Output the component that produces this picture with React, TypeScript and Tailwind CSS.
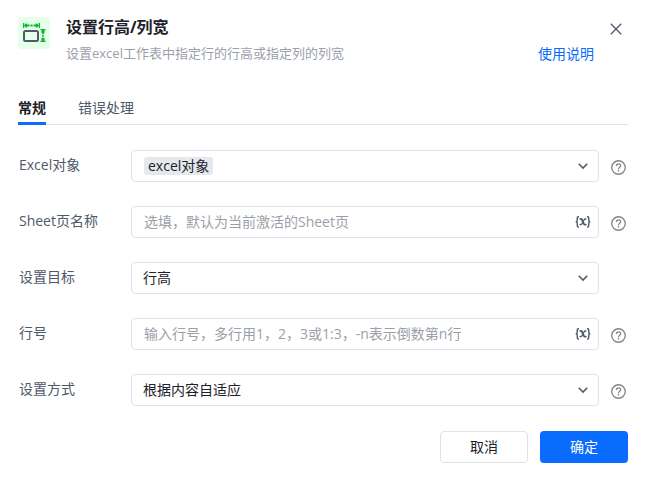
import React from 'react';

function SizeIcon() {
  return (
    <svg viewBox="0 0 32 32" className="size-8 shrink-0" aria-hidden="true">
      <rect width="32" height="32" rx="4" fill="#e6ffea" />
      <rect x="6" y="14" width="14" height="10" rx="1.5" fill="none" stroke="#4e5969" strokeWidth="2" />
      <g stroke="#0ab82c" fill="none">
        <path d="M5.700 6v5M21.300 6v5" strokeWidth="1.400" />
        <path d="M7 8.500h4.500M12.500 8.500h2M15.500 8.500h4.500" strokeWidth="1.800" />
        <path d="M22.500 12.700h5M22.500 24.300h5" strokeWidth="1.400" />
        <path d="M25 13v4M25 18h0M25 17.700v1.800M25 20.500v4" strokeWidth="1.800" />
      </g>
      <path d="M6 8.500l3-2.400v4.800zM21 8.500l-3-2.400v4.800zM25 12.500l-2.400 3h4.800zM25 24.500l-2.400-3h4.800z" fill="#0ab82c" />
    </svg>
  );
}

function Chevron() {
  return (
    <svg viewBox="0 0 12 12" className="pointer-events-none size-3 shrink-0" fill="none" stroke="#4e5969" strokeWidth="1.600" aria-hidden="true">
      <path d="M1.800 3.800L6 8l4.200-4.200" />
    </svg>
  );
}

function VariableIcon() {
  return (
    <svg viewBox="0 0 16 14" className="h-3.5 w-4" fill="none" stroke="#4e5969" strokeWidth="1.400" aria-hidden="true">
      <path d="M4 1.700H3.300Q2.300 1.700 2.300 2.800V5Q2.300 6.600 .8 6.800Q2.300 7 2.300 8.600V10.800Q2.300 12 3.300 12H4" />
      <path d="M12 1.700h.7Q13.700 1.700 13.700 2.800V5Q13.700 6.600 15.200 6.800Q13.700 7 13.700 8.600V10.800Q13.700 12 12.700 12H12" />
      <path d="M4.600 4.200Q6.300 3.300 7.100 5L8.900 8.800Q9.700 10.300 11.400 9.300" strokeWidth="1.800" />
      <path d="M11.400 4.200Q9.800 3.500 9 5L7 8.600Q6.200 10.100 4.600 9.300" strokeWidth="1.300" />
    </svg>
  );
}

function Help() {
  return (
    <button type="button" aria-label="帮助" className="mt-[3px] shrink-0">
      <svg viewBox="0 0 16 16" className="size-[15px]" fill="none" stroke="#858585" strokeWidth="1.400" aria-hidden="true">
        <circle cx="8" cy="8" r="7.200" />
        <path d="M5.700 6.400C5.700 5 6.700 4.100 8 4.100s2.300.8 2.300 2.100c0 1.600-2.300 1.600-2.300 3.600" />
        <path d="M8 10.900v1.500" />
      </svg>
    </button>
  );
}

function Row({ id, label, help = true, children }: { id: string; label: string; help?: boolean; children: React.ReactNode }) {
  return (
    <div className="flex items-center">
      <label htmlFor={id} className="-mt-0.5 w-[113px] shrink-0 pl-px text-[#4e5969]">
        {label}
      </label>
      <div className="flex h-8 min-w-0 flex-1 items-center rounded border border-[#e0e2e8] bg-white">{children}</div>
      <div className="ml-3 flex w-[17px] shrink-0">{help && <Help />}</div>
    </div>
  );
}

function SelectField({ id, value }: { id: string; value: string }) {
  return (
    <div className="relative flex h-full flex-1 items-center">
      <select id={id} className="h-full w-full appearance-none bg-transparent pl-[11px] pr-8 text-[#1d2129] outline-none">
        <option>{value}</option>
      </select>
      <span className="pointer-events-none absolute right-[9px]">
        <Chevron />
      </span>
    </div>
  );
}

function TextField({ id, placeholder }: { id: string; placeholder: string }) {
  return (
    <>
      <input
        id={id}
        type="text"
        placeholder={placeholder}
        className="h-full min-w-0 flex-1 bg-transparent pb-0.5 pl-3 outline-none placeholder:text-[#9b9fa9]"
      />
      <button type="button" aria-label="插入变量" className="mr-[7px] shrink-0">
        <VariableIcon />
      </button>
    </>
  );
}

export default function App() {
  return (
    <main className="bg-white pb-[18px] pl-[18px] pr-5 pt-[17px] font-['Open_Sans','Noto_Sans_CJK_SC',sans-serif] text-sm leading-5 text-[#1d2129]">
      <header className="flex">
        <SizeIcon />
        <div className="ml-4 min-w-0 flex-1">
          <h1 className="text-base font-bold leading-5">设置行高/列宽</h1>
          <p className="mt-1.5 text-[13px] leading-5 text-[#9b9fa9]">设置excel工作表中指定行的行高或指定列的列宽</p>
        </div>
        <div className="flex shrink-0 items-start">
          <a href="#help" className="mt-[27px] text-[#0a6cff]">
            使用说明
          </a>
          <button type="button" aria-label="关闭" className="ml-4 mr-1.5 mt-1.5">
            <svg viewBox="0 0 12 12" className="size-3" stroke="#4e5969" strokeWidth="1.300" aria-hidden="true">
              <path d="M.8 .8l10.400 10.400M11.200 .8L.8 11.200" />
            </svg>
          </button>
        </div>
      </header>

      <nav role="tablist" className="mt-[34px] flex gap-8 border-b border-[#e0e2e8]">
        <button type="button" role="tab" aria-selected="true" className="-mb-px h-[27px] border-b-3 border-[#0a6cff] pb-1 font-bold">
          常规
        </button>
        <button type="button" role="tab" aria-selected="false" className="-mb-px h-[27px] border-b-3 border-transparent pb-1 text-[#4e5969]">
          错误处理
        </button>
      </nav>

      <form className="mt-[25px] flex flex-col gap-6">
        <Row id="target-book" label="Excel对象">
          <div className="flex flex-1 items-center justify-between pl-3 pr-[9px]">
            <select
              id="target-book"
              className="field-sizing-content h-[18px] appearance-none rounded-[3px] bg-[#e5e8ed] px-1 text-sm leading-[18px] text-[#1d2129] outline-none"
            >
              <option>excel对象</option>
            </select>
            <Chevron />
          </div>
        </Row>
        <Row id="sheet" label="Sheet页名称">
          <TextField id="sheet" placeholder="选填，默认为当前激活的Sheet页" />
        </Row>
        <Row id="goal" label="设置目标" help={false}>
          <SelectField id="goal" value="行高" />
        </Row>
        <Row id="line" label="行号">
          <TextField id="line" placeholder="输入行号，多行用1，2，3或1:3，-n表示倒数第n行" />
        </Row>
        <Row id="mode" label="设置方式">
          <SelectField id="mode" value="根据内容自适应" />
        </Row>
      </form>

      <footer className="mt-[25px] flex justify-end gap-3">
        <button type="button" className="h-8 w-[88px] rounded border border-[#e0e2e8] bg-white">
          取消
        </button>
        <button type="button" className="h-8 w-[88px] rounded bg-[#0a6cff] text-white">
          确定
        </button>
      </footer>
    </main>
  );
}
